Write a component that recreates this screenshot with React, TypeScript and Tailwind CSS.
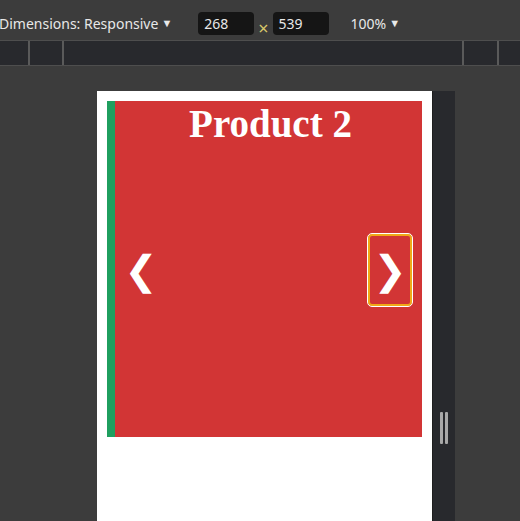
import React from 'react';

function Toolbar() {
    return (
        <div className="h-[40px] bg-[#3c3c3c] flex items-end pb-[5px] text-[14px] text-[#e8e8e8] font-['Noto_Sans',sans-serif] whitespace-nowrap">
            <div className="flex items-center h-[23px]">
                <span className="ml-[-1px]">Dimensions: Responsive</span>
                <span className="ml-[3px] text-[11px]">▼</span>
                <div className="ml-[26px] w-[56px] h-[23px] rounded-[4px] bg-[#151515] pl-[6px] leading-[23px]">268</div>
                <span className="mx-[4px] text-[#d8c86a] text-[18px] leading-none mt-[8px]">×</span>
                <div className="w-[56px] h-[23px] rounded-[4px] bg-[#151515] pl-[6px] leading-[23px]">539</div>
                <span className="ml-[22px]">100%</span>
                <span className="ml-[3px] text-[11px]">▼</span>
            </div>
        </div>
    );
}

function Ruler() {
    return (
        <div className="h-[26px] bg-[#28292d] border-y border-[#4e4e4e] flex">
            <div className="w-[30px] border-r-[2px] border-[#5a5a5a]" />
            <div className="w-[34px] border-r-[2px] border-[#5a5a5a]" />
            <div className="flex-1" />
            <div className="w-[35px] border-l-[2px] border-[#5a5a5a]" />
            <div className="w-[23px] border-l-[2px] border-[#5a5a5a]" />
        </div>
    );
}

function Slider() {
    return (
        <div className="w-[335px] bg-white p-[10px] pb-0 h-full">
            <div className="h-[336px] bg-[#d23535] border-l-[8px] border-[#1f9f5f] flex flex-col">
                <h1 className="text-center text-white font-bold text-[39px] leading-[44px] pt-[1px] pl-[4px] font-['Liberation_Serif',serif]">
                    Product 2
                </h1>
                <div className="flex-1 flex items-center justify-between pb-[44px] pr-[10px]">
                    <button className="ml-[4px] w-[44px] h-[72px] flex items-center justify-center text-white text-[40px] leading-none font-['DejaVu_Sans',sans-serif]">
                        ❮
                    </button>
                    <button className="w-[44px] h-[72px] flex items-center justify-center text-white text-[40px] leading-none font-['DejaVu_Sans',sans-serif] rounded-[4px] border-[2px] border-[#f0a818] outline outline-1 outline-[#ffffff]">
                        ❯
                    </button>
                </div>
            </div>
        </div>
    );
}

export default function App() {
    return (
        <div className="w-[520px] h-[521px] overflow-hidden bg-[#3c3c3c] flex flex-col">
            <Toolbar />
            <Ruler />
            <div className="flex-1 flex pl-[97px] pt-[25px] min-h-0">
                <Slider />
                <div className="w-[23px] bg-[#28292d] border-l border-[#1e1e1e] flex flex-col items-center pt-[321px]">
                    <div className="flex gap-[2px] h-[32px]">
                        <div className="w-[3px] bg-[#a8a8a8] rounded-[1px]" />
                        <div className="w-[3px] bg-[#a8a8a8] rounded-[1px]" />
                    </div>
                </div>
            </div>
        </div>
    );
}
